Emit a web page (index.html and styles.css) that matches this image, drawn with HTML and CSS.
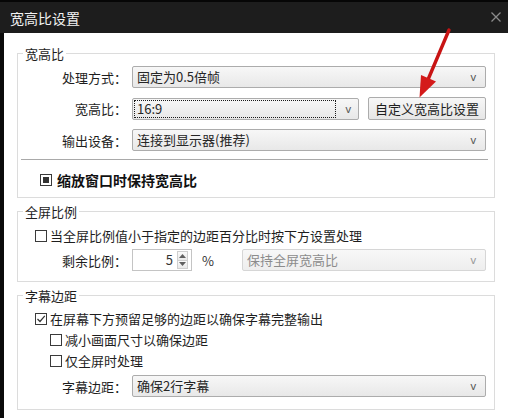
FILE: index.html
```html
<!DOCTYPE html>
<html lang="zh-CN">
<head>
<meta charset="utf-8">
<title>宽高比设置</title>
<link rel="stylesheet" href="styles.css">
</head>
<body>
<div class="titlebar">
  <span class="title">宽高比设置</span>
  <svg class="close" width="10" height="10" viewBox="0 0 10 10"><path d="M0.5 0.5 L9.5 9.5 M9.5 0.5 L0.5 9.5" stroke="#8c8c8c" stroke-width="1.3" fill="none"/></svg>
</div>
<div class="content">
  <div class="group g1">
    <div class="legend">宽高比</div>
    <div class="row r1">
      <span class="lbl">处理方式：</span>
      <div class="select full"><span class="val">固定为0.5倍帧</span><span class="caret">v</span></div>
    </div>
    <div class="row r2">
      <span class="lbl">宽高比：</span>
      <div class="select combo"><span class="focus">16:9</span><span class="caret">v</span></div>
      <div class="btn">自定义宽高比设置</div>
    </div>
    <div class="row r3">
      <span class="lbl">输出设备：</span>
      <div class="select full"><span class="val">连接到显示器(推荐)</span><span class="caret">v</span></div>
    </div>
    <div class="sep"></div>
    <div class="check bold-check">
      <span class="box mixed"><span class="fill"></span></span>
      <span class="ctext">缩放窗口时保持宽高比</span>
    </div>
  </div>

  <div class="group g2">
    <div class="legend">全屏比例</div>
    <div class="check top-check">
      <span class="box"></span>
      <span class="ctext">当全屏比例值小于指定的边距百分比时按下方设置处理</span>
    </div>
    <div class="row r4">
      <span class="lbl">剩余比例：</span>
      <div class="spin">
        <span class="num">5</span>
        <span class="spinbtns">
          <span class="sb up"><svg width="7" height="4" viewBox="0 0 7 4"><path d="M0 4 L3.5 0 L7 4 Z" fill="#606060"/></svg></span>
          <span class="sb down"><svg width="7" height="4" viewBox="0 0 7 4"><path d="M0 0 L3.5 4 L7 0 Z" fill="#606060"/></svg></span>
        </span>
      </div>
      <span class="pct">%</span>
      <div class="select disabled"><span class="val">保持全屏宽高比</span><span class="caret">v</span></div>
    </div>
  </div>

  <div class="group g3">
    <div class="legend">字幕边距</div>
    <div class="check top-check c3">
      <span class="box"><svg width="10" height="10" viewBox="0 0 10 10"><path d="M1.5 5 L4 7.5 L8.8 1.8" stroke="#333" stroke-width="1.2" fill="none"/></svg></span>
      <span class="ctext">在屏幕下方预留足够的边距以确保字幕完整输出</span>
    </div>
    <div class="check sub-check c3">
      <span class="box"></span>
      <span class="ctext">减小画面尺寸以确保边距</span>
    </div>
    <div class="check sub-check c3">
      <span class="box"></span>
      <span class="ctext">仅全屏时处理</span>
    </div>
    <div class="row r5">
      <span class="lbl">字幕边距：</span>
      <div class="select full"><span class="val">确保2行字幕</span><span class="caret">v</span></div>
    </div>
  </div>
</div>

<svg class="arrow" width="508" height="418" viewBox="0 0 508 418">
  <line x1="449" y1="30" x2="427" y2="82" stroke="#c81414" stroke-width="3.4" stroke-linecap="round"/>
  <path d="M421 75 L436 81.5 L419.5 97.5 Z" fill="#d41a1a"/>
</svg>
</body>
</html>
```

FILE: styles.css
```css
html, body {
  margin: 0;
  padding: 0;
}
body {
  width: 508px;
  height: 418px;
  overflow: hidden;
  background: #fff;
  font-family: "Noto Sans CJK SC", "Noto Sans", sans-serif;
  font-size: 13px;
  color: #1e1e1e;
  position: relative;
}
.titlebar {
  height: 31px;
  border-top: 2px solid #060606;
  background: #1d1d1d;
  display: flex;
  align-items: center;
  justify-content: space-between;
  padding: 0 7px 0 10px;
}
.title {
  color: #f2f2f2;
  font-size: 14px;
  line-height: 30px;
}
.close {
  display: block;
  margin-top: -2px;
}
.content {
  border-left: 4px solid #0a0a0a;
  height: 385px;
  background: #fff;
  padding-top: 20px;
  box-sizing: border-box;
}
.group {
  border: 1px solid #dcdcdc;
  margin: 0 13px 13px 13px;
}
.legend {
  width: fit-content;
  margin: -10px 0 0 5px;
  padding: 0 2px;
  background: #fff;
  line-height: 19px;
}
.row {
  display: flex;
  align-items: center;
}
.lbl {
  width: 109px;
  text-align: right;
  margin-right: 5px;
  white-space: nowrap;
  flex: none;
}
.select {
  height: 22px;
  box-sizing: border-box;
  border: 1px solid #acacac;
  border-radius: 2px;
  background: linear-gradient(#f7f7f7, #e8e8e8);
  display: flex;
  align-items: center;
  justify-content: space-between;
  color: #262626;
  flex: none;
}
.select.full { width: 354px; }
.val {
  padding-left: 4px;
  line-height: 20px;
  white-space: nowrap;
}
.caret {
  font-family: "Noto Sans", sans-serif;
  font-size: 11px;
  color: #555;
  padding-right: 9px;
  line-height: 20px;
}
.r1 { margin-top: 3px; }
.r2 { margin-top: 9px; height: 23px; }
.r3 { margin-top: 9px; }
.combo { width: 227px; }
.focus {
  margin-left: 1px;
  width: 202px;
  height: 18px;
  box-sizing: border-box;
  border: 1px dotted #1a1a1a;
  padding-left: 2px;
  line-height: 16px;
}
.combo .caret { padding-right: 7px; }
.btn {
  margin-left: 9px;
  width: 118px;
  height: 23px;
  box-sizing: border-box;
  border: 1px solid #acacac;
  border-radius: 2px;
  background: linear-gradient(#f7f7f7, #e6e6e6);
  text-align: center;
  line-height: 21px;
  color: #1e1e1e;
  white-space: nowrap;
  flex: none;
}
.sep {
  margin: 8px 6px 0 3px;
  height: 1px;
  background: #a9a9a9;
}
.check {
  display: flex;
  align-items: center;
  line-height: 20px;
  white-space: nowrap;
}
.box {
  width: 12px;
  height: 12px;
  box-sizing: border-box;
  border: 1px solid #3a3a3a;
  background: #fff;
  flex: none;
  display: flex;
  align-items: center;
  justify-content: center;
}
.bold-check {
  margin-top: 10px;
  padding-left: 22px;
  padding-bottom: 7px;
  font-weight: bold;
  font-size: 14px;
  color: #111;
}
.bold-check .box { margin-right: 5px; }
.box.mixed .fill {
  width: 6px;
  height: 6px;
  background: #333;
}
.top-check {
  padding-left: 17px;
  margin-top: 5px;
}
.top-check .box, .sub-check .box { margin-right: 3px; }
.sub-check { padding-left: 32px; }
.c3 { line-height: 21px; }
.g3 .top-check { margin-top: 3px; }

.r4 {
  margin-top: 3px;
  margin-bottom: 10px;
}
.spin {
  width: 60px;
  height: 22px;
  box-sizing: border-box;
  border: 1px solid #c4c4c4;
  background: #fff;
  display: flex;
  align-items: center;
  justify-content: flex-end;
  flex: none;
}
.num {
  line-height: 20px;
  padding-right: 4px;
  color: #333;
}
.spinbtns {
  display: flex;
  flex-direction: column;
  width: 11px;
  height: 18px;
  margin-right: 3px;
}
.sb {
  flex: 1;
  border: 1px solid #cfcfcf;
  background: linear-gradient(#fafafa, #e9e9e9);
  display: flex;
  align-items: center;
  justify-content: center;
}
.sb.down { border-top: none; }
.pct {
  width: 50px;
  box-sizing: border-box;
  padding-left: 10px;
  flex: none;
  color: #333;
}
.select.disabled {
  width: 244px;
  border-color: #d6d6d6;
  background: linear-gradient(#f8f8f8, #eeeeee);
  color: #8c8c8c;
}
.select.disabled .caret { color: #999; }
.r5 {
  margin-top: 4px;
  margin-bottom: 12px;
}
.arrow {
  position: absolute;
  left: 0;
  top: 0;
  pointer-events: none;
}
```
